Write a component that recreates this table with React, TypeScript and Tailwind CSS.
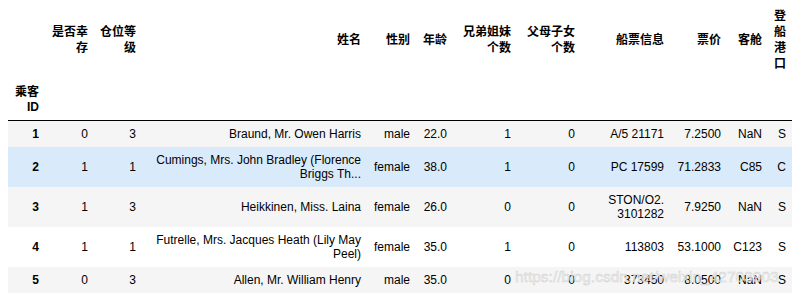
import React from "react";

type Row = {
  id: string;
  survived: string;
  pclass: string;
  name: React.ReactNode;
  sex: string;
  age: string;
  sibsp: string;
  parch: string;
  ticket: React.ReactNode;
  fare: string;
  cabin: string;
  embarked: string;
  bg: string;
};

const rows: Row[] = [
  { id: "1", survived: "0", pclass: "3", name: "Braund, Mr. Owen Harris", sex: "male", age: "22.0", sibsp: "1", parch: "0", ticket: "A/5 21171", fare: "7.2500", cabin: "NaN", embarked: "S", bg: "bg-[#f5f5f5]" },
  { id: "2", survived: "1", pclass: "1", name: (<>Cumings, Mrs. John Bradley (Florence<br />Briggs Th...</>), sex: "female", age: "38.0", sibsp: "1", parch: "0", ticket: "PC 17599", fare: "71.2833", cabin: "C85", embarked: "C", bg: "bg-[#d9ebfa]" },
  { id: "3", survived: "1", pclass: "3", name: "Heikkinen, Miss. Laina", sex: "female", age: "26.0", sibsp: "0", parch: "0", ticket: (<>STON/O2.<br />3101282</>), fare: "7.9250", cabin: "NaN", embarked: "S", bg: "bg-[#f5f5f5]" },
  { id: "4", survived: "1", pclass: "1", name: (<>Futrelle, Mrs. Jacques Heath (Lily May<br />Peel)</>), sex: "female", age: "35.0", sibsp: "1", parch: "0", ticket: "113803", fare: "53.1000", cabin: "C123", embarked: "S", bg: "bg-white" },
  { id: "5", survived: "0", pclass: "3", name: "Allen, Mr. William Henry", sex: "male", age: "35.0", sibsp: "0", parch: "0", ticket: "373450", fare: "8.0500", cabin: "NaN", embarked: "S", bg: "bg-[#f5f5f5]" },
];

const th = "px-[6px] py-[6px] text-right align-middle font-bold leading-[16px] whitespace-nowrap";
const td = "px-[6px] py-[6px] text-right align-middle leading-[14px] whitespace-nowrap";

export default function App() {
  return (
    <div className="relative w-[795px] h-[294px] overflow-hidden bg-white pt-[2px] font-['Liberation_Sans','Noto_Sans_CJK_SC',sans-serif] text-[12px] text-black">
      <table className="ml-[8px] w-[784px] table-fixed border-collapse">
        <colgroup>
          <col className="w-[37px]" />
          <col className="w-[49px]" />
          <col className="w-[48px]" />
          <col className="w-[225px]" />
          <col className="w-[49px]" />
          <col className="w-[37px]" />
          <col className="w-[64px]" />
          <col className="w-[64px]" />
          <col className="w-[89px]" />
          <col className="w-[57px]" />
          <col className="w-[41px]" />
          <col className="w-[24px]" />
        </colgroup>
        <thead>
          <tr>
            <th className={th}></th>
            <th className={th}>是否幸<br />存</th>
            <th className={th}>仓位等<br />级</th>
            <th className={th}>姓名</th>
            <th className={th}>性别</th>
            <th className={th}>年龄</th>
            <th className={th}>兄弟姐妹<br />个数</th>
            <th className={th}>父母子女<br />个数</th>
            <th className={th}>船票信息</th>
            <th className={th}>票价</th>
            <th className={th}>客舱</th>
            <th className={th}>登<br />船<br />港<br />口</th>
          </tr>
          <tr className="border-b border-black">
            <th className="px-[6px] pt-[6px] pb-[6px] text-right align-bottom font-bold whitespace-nowrap">
              <div className="leading-[16px]">乘客</div>
              <div className="leading-[14px]">ID</div>
            </th>
            <th></th><th></th><th></th><th></th><th></th><th></th><th></th><th></th><th></th><th></th><th></th>
          </tr>
        </thead>
        <tbody>
          {rows.map((r) => (
            <tr key={r.id} className={r.bg}>
              <th className={td + " font-bold"}>{r.id}</th>
              <td className={td}>{r.survived}</td>
              <td className={td}>{r.pclass}</td>
              <td className={td}>{r.name}</td>
              <td className={td}>{r.sex}</td>
              <td className={td}>{r.age}</td>
              <td className={td}>{r.sibsp}</td>
              <td className={td}>{r.parch}</td>
              <td className={td}>{r.ticket}</td>
              <td className={td}>{r.fare}</td>
              <td className={td}>{r.cabin}</td>
              <td className={td}>{r.embarked}</td>
            </tr>
          ))}
        </tbody>
      </table>
      <div className="absolute left-[515px] top-[268px] text-[15.5px] leading-[18px] text-[#ebebeb]/80 font-['Liberation_Sans',sans-serif] whitespace-nowrap pointer-events-none [-webkit-text-stroke:0.4px_#cfcfcf]">
        https://blog.csdn.net/weixin_42703903
      </div>
    </div>
  );
}
